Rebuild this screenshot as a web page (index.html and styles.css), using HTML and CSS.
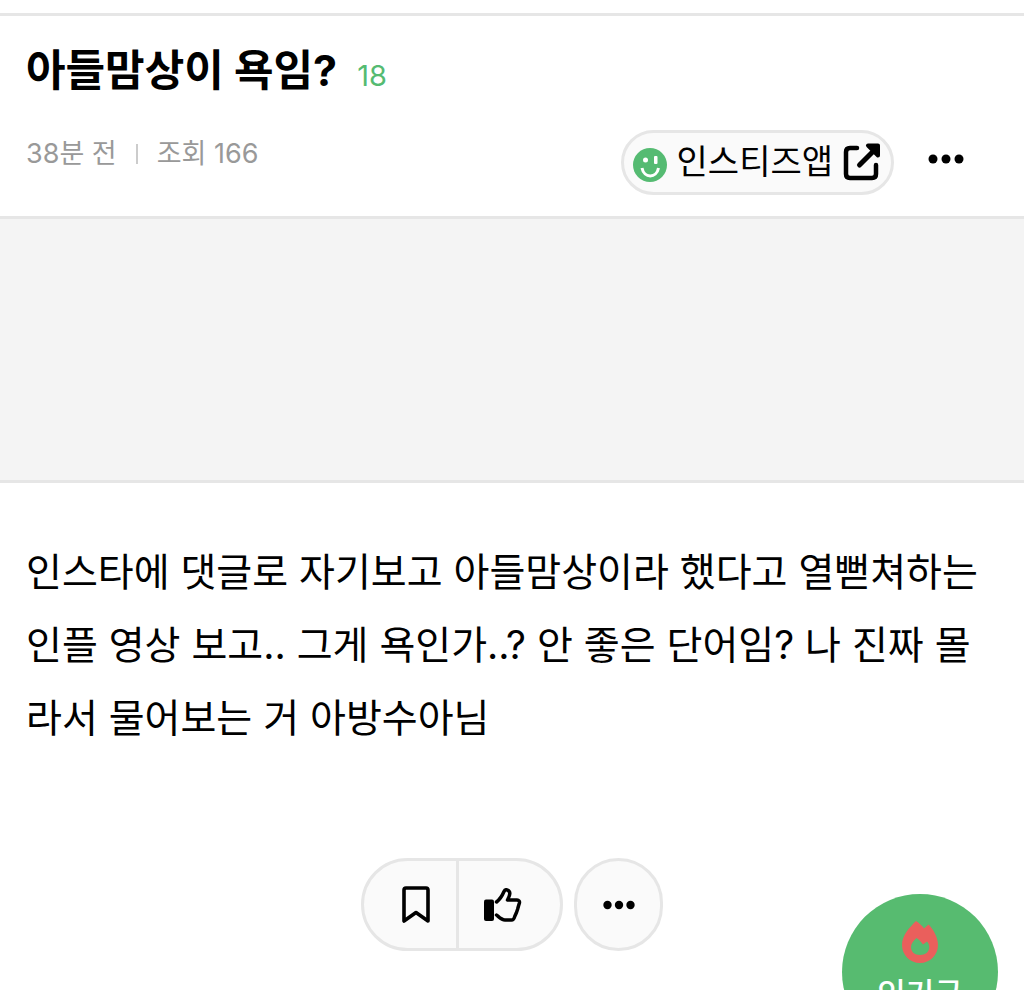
FILE: index.html
```
<!DOCTYPE html>
<html lang="ko">
<head>
  <meta charset="UTF-8">
  <meta name="viewport" content="width=device-width, initial-scale=1">
  <title>아들맘상이 욕임?</title>
  <link rel="stylesheet" href="styles.css">
</head>
<body>

  <article class="post">
    <header class="post-header">
      <div class="title-row">
        <h1 class="title">아들맘상이 욕임?</h1>
        <span class="comment-count">18</span>
      </div>

      <div class="info-row">
        <div class="meta">
          <span>38분 전</span>
          <span class="separator"></span>
          <span>조회 166</span>
        </div>

        <div class="tools">
          <a class="app-link" href="#">
            <svg class="smile" viewBox="0 0 34 34" aria-hidden="true">
              <circle cx="17" cy="17" r="17" fill="#55bb72"/>
              <circle cx="12.500" cy="12" r="2.500" fill="#fff"/>
              <rect x="21" y="8" width="3.500" height="8" rx="1" fill="#fff"/>
              <path d="M9 20c2 10.500 14.500 10.500 16.500 0" fill="none" stroke="#fff" stroke-width="3"/>
            </svg>
            <span class="app-name">인스티즈앱</span>
            <svg class="external" viewBox="0 0 38 38" aria-hidden="true">
              <path d="M14 5H7Q3 5 3 9v22q0 4 4 4h22q4 0 4-4v-9" fill="none" stroke="#000" stroke-width="4.500" stroke-linecap="round"/>
              <path d="M16.500 22L31 7.500" stroke="#000" stroke-width="5" stroke-linecap="round"/>
              <path d="M25 2.500h10v10z" stroke="#000" stroke-width="4" stroke-linejoin="round"/>
            </svg>
          </a>
          <button class="more" type="button" aria-label="더보기">
            <svg class="dots" viewBox="0 0 36 10" aria-hidden="true">
              <circle cx="5" cy="5" r="4.500"/><circle cx="18" cy="5" r="4.500"/><circle cx="31" cy="5" r="4.500"/>
            </svg>
          </button>
        </div>
      </div>
    </header>

    <div class="banner"></div>

    <p class="content">인스타에 댓글로 자기보고 아들맘상이라 했다고 열뻗쳐하는 인플 영상 보고.. 그게 욕인가..? 안 좋은 단어임? 나 진짜 몰라서 물어보는 거 아방수아님</p>

    <div class="actions">
      <div class="action-group">
        <button class="action bookmark" type="button" aria-label="스크랩">
          <svg width="28" height="38" viewBox="0 0 28 38" aria-hidden="true">
            <path d="M2 35V4q0-2 2-2h20q2 0 2 2v31l-12-8.500z" fill="none" stroke="#000" stroke-width="3.600" stroke-linejoin="round"/>
          </svg>
        </button>
        <button class="action like" type="button" aria-label="추천">
          <svg width="38" height="34" viewBox="0 0 38 34" aria-hidden="true">
            <rect x="0" y="11.500" width="10" height="21.500" rx="2"/>
            <path d="M12.500 14C17 10.500 18.500 7 20 3.500c1.500-3.200 6-1.500 5.800 2.200-.1 2.200-1.300 4.300-2.300 6.300H33c2 0 2.800 1.500 2.400 3l-1 3.300-.8 3-1.200 3.500-1.500 3.200C30 31 29.500 32 27.500 32H21c-3.500 0-5.500-2.500-8.500-5" fill="none" stroke="#000" stroke-width="3.500" stroke-linecap="round" stroke-linejoin="round"/>
          </svg>
        </button>
      </div>
      <button class="action-more" type="button" aria-label="더보기">
        <svg width="32" height="10" viewBox="0 0 32 10" aria-hidden="true">
          <circle cx="4.500" cy="5" r="4.200"/><circle cx="16" cy="5" r="4.200"/><circle cx="27.500" cy="5" r="4.200"/>
        </svg>
      </button>
    </div>
  </article>

  <a class="popular" href="#">
    <svg width="36" height="42" viewBox="0 0 36 42" aria-hidden="true">
      <path fill="#ea5f5c" fill-rule="evenodd" d="M14 0C8 6 0 14 0 24c0 10 8 18 18 18s18-8 18-18C36 16 31 8 26.500 3.500L22 7.500C20 4.500 17 2 14 0zM14.500 17c2.500 1.500 4.500 3.500 6.500 6.500l4-3c1.500 1.500 2.300 3.500 2.300 5.500 0 5-4 8-9.300 8s-9-3-9-8c0-3.500 2.500-6.500 5.500-9z"/>
    </svg>
    <span>인기글</span>
  </a>

</body>
</html>
```
FILE: styles.css
```
* {
  box-sizing: border-box;
}

body {
  margin: 0;
  padding-top: 13px;
  background: #fff;
  color: #000;
  font-family: Inter, "Noto Sans CJK KR", sans-serif;
}

a {
  color: inherit;
  text-decoration: none;
}

button {
  border: none;
  padding: 0;
  background: none;
  cursor: pointer;
}

svg {
  display: block;
  flex-shrink: 0;
}

.post-header {
  padding: 22px 26px 21px;
  border-top: 3px solid #e6e6e6;
  border-bottom: 3px solid #e6e6e6;
}

.title-row {
  display: flex;
  align-items: baseline;
  gap: 20px;
}

.title {
  margin: 0;
  font-size: 43px;
  line-height: 64px;
  font-weight: 700;
}

.comment-count {
  color: #55bb72;
  font-size: 29px;
  line-height: 40px;
}

.info-row {
  display: flex;
  justify-content: space-between;
  align-items: center;
  margin-top: 28px;
}

.meta {
  display: flex;
  align-items: center;
  gap: 19px;
  padding-bottom: 18px;
  color: #999;
  font-size: 27px;
  line-height: 40px;
}

.separator {
  width: 2px;
  height: 20px;
  background: #ccc;
}

.tools {
  display: flex;
  align-items: center;
  gap: 34px;
  padding-right: 34px;
}

.app-link {
  display: flex;
  align-items: center;
  gap: 10px;
  height: 65px;
  padding: 0 10px 0 9px;
  border: 3px solid #e6e6e6;
  border-radius: 40px;
  background: #fafafa;
}

.app-name {
  padding-bottom: 2px;
  font-size: 34px;
  line-height: 55px;
}

.smile {
  width: 34px;
  height: 34px;
  margin-top: 4px;
}

.external {
  width: 38px;
  height: 38px;
  margin-bottom: 2px;
}

.dots {
  width: 36px;
  height: 10px;
}

.more {
  padding-bottom: 8px;
}

.banner {
  height: 264px;
  border-bottom: 3px solid #e6e6e6;
  background: #f4f4f4;
}

.content {
  margin: 0;
  padding: 52px 26px 104px;
  font-size: 39px;
  line-height: 73px;
}

.actions {
  display: flex;
  justify-content: center;
  gap: 11px;
}

.action-group {
  display: flex;
  height: 93px;
  border: 3px solid #e6e6e6;
  border-radius: 48px;
  background: #fafafa;
}

.action {
  display: flex;
  align-items: center;
}

.bookmark {
  padding: 0 26px 0 38px;
  border-right: 3px solid #e6e6e6;
}

.like {
  padding: 0 38px 0 25px;
}

.action-more {
  display: flex;
  align-items: center;
  justify-content: center;
  width: 89px;
  height: 93px;
  border: 3px solid #e6e6e6;
  border-radius: 48px;
  background: #fafafa;
}

/* floating button, half hidden under the bottom edge */
.popular {
  position: fixed;
  right: 26px;
  bottom: -60px;
  display: flex;
  flex-direction: column;
  align-items: center;
  gap: 8px;
  width: 156px;
  height: 156px;
  padding-top: 27px;
  border-radius: 50%;
  background: #57bb70;
  color: #fff;
  font-size: 31px;
  line-height: 46px;
  font-weight: 500;
}
```
